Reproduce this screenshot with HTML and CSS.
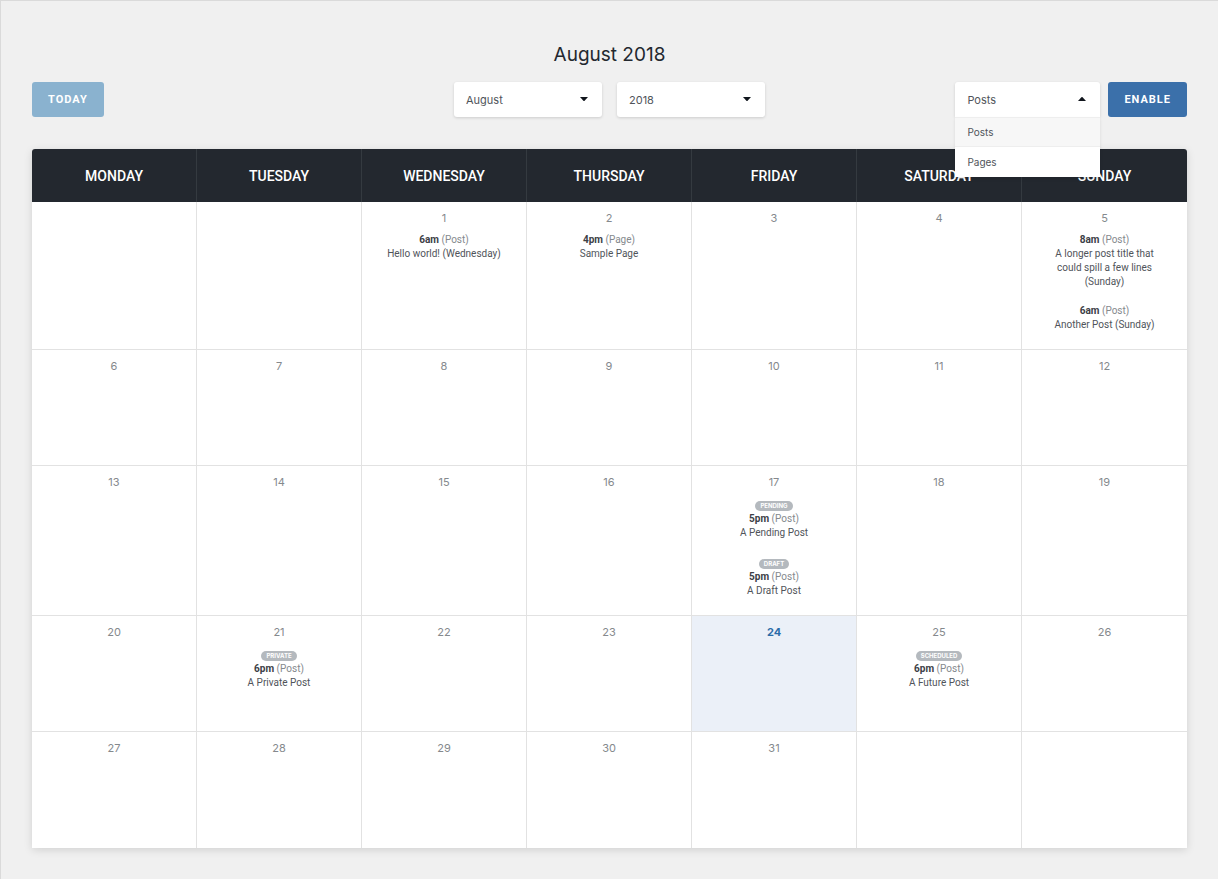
FILE: index.html
```html
<!DOCTYPE html>
<html lang="en">
<head>
<meta charset="utf-8">
<meta name="viewport" content="width=device-width, initial-scale=1">
<title>August 2018</title>
<link rel="stylesheet" href="styles.css">
</head>
<body>
<main class="page">
  <h1 class="title">August 2018</h1>
  <div class="toolbar">
    <div class="group">
      <button class="button button-today" type="button">Today</button>
    </div>
    <div class="group group-date">
      <div class="picker">
        <select class="select" aria-label="Month"><option>August</option></select>
        <svg class="caret" viewBox="0 0 8 4" aria-hidden="true"><path d="M0 0h8L4.600 3.700q-.6.5-1.200 0z"/></svg>
      </div>
      <div class="picker">
        <select class="select" aria-label="Year"><option>2018</option></select>
        <svg class="caret" viewBox="0 0 8 4" aria-hidden="true"><path d="M0 0h8L4.600 3.700q-.6.5-1.200 0z"/></svg>
      </div>
    </div>
    <div class="group group-type">
      <div class="picker picker-open">
        <select class="select" aria-label="Content type"><option>Posts</option><option>Pages</option></select>
        <svg class="caret" viewBox="0 0 8 4" aria-hidden="true"><path d="M0 4h8L4.600.3q-.6-.5-1.200 0z"/></svg>
        <ul class="menu">
          <li><button class="menu-item menu-item-active" type="button">Posts</button></li>
          <li><button class="menu-item" type="button">Pages</button></li>
        </ul>
      </div>
      <button class="button button-enable" type="button">Enable</button>
    </div>
  </div>
  <table class="calendar">
    <thead>
      <tr><th>Monday</th><th>Tuesday</th><th>Wednesday</th><th>Thursday</th><th>Friday</th><th>Saturday</th><th>Sunday</th></tr>
    </thead>
    <tbody>
      <tr>
        <td></td>
        <td></td>
        <td><div class="day">1</div>
          <div class="entry"><strong class="time">6am</strong> <span class="type">(Post)</span><div>Hello world! (Wednesday)</div></div></td>
        <td><div class="day">2</div>
          <div class="entry"><strong class="time">4pm</strong> <span class="type">(Page)</span><div>Sample Page</div></div></td>
        <td><div class="day">3</div></td>
        <td><div class="day">4</div></td>
        <td><div class="day">5</div>
          <div class="entry"><strong class="time">8am</strong> <span class="type">(Post)</span><div>A longer post title that could spill a few lines (Sunday)</div></div>
          <div class="entry"><strong class="time">6am</strong> <span class="type">(Post)</span><div>Another Post (Sunday)</div></div></td>
      </tr>
      <tr>
        <td><div class="day">6</div></td>
        <td><div class="day">7</div></td>
        <td><div class="day">8</div></td>
        <td><div class="day">9</div></td>
        <td><div class="day">10</div></td>
        <td><div class="day">11</div></td>
        <td><div class="day">12</div></td>
      </tr>
      <tr>
        <td><div class="day">13</div></td>
        <td><div class="day">14</div></td>
        <td><div class="day">15</div></td>
        <td><div class="day">16</div></td>
        <td><div class="day">17</div>
          <div class="entry"><div class="status"><span class="badge">Pending</span></div><strong class="time">5pm</strong> <span class="type">(Post)</span><div>A Pending Post</div></div>
          <div class="entry"><div class="status"><span class="badge">Draft</span></div><strong class="time">5pm</strong> <span class="type">(Post)</span><div>A Draft Post</div></div></td>
        <td><div class="day">18</div></td>
        <td><div class="day">19</div></td>
      </tr>
      <tr>
        <td><div class="day">20</div></td>
        <td><div class="day">21</div>
          <div class="entry"><div class="status"><span class="badge">Private</span></div><strong class="time">6pm</strong> <span class="type">(Post)</span><div>A Private Post</div></div></td>
        <td><div class="day">22</div></td>
        <td><div class="day">23</div></td>
        <td class="today"><div class="day">24</div></td>
        <td><div class="day">25</div>
          <div class="entry"><div class="status"><span class="badge">Scheduled</span></div><strong class="time">6pm</strong> <span class="type">(Post)</span><div>A Future Post</div></div></td>
        <td><div class="day">26</div></td>
      </tr>
      <tr>
        <td><div class="day">27</div></td>
        <td><div class="day">28</div></td>
        <td><div class="day">29</div></td>
        <td><div class="day">30</div></td>
        <td><div class="day">31</div></td>
        <td></td>
        <td></td>
      </tr>
    </tbody>
  </table>
</main>
</body>
</html>
```
FILE: styles.css
```css
* {
  box-sizing: border-box;
}

body {
  margin: 0;
  background: #f0f0f0;
  color: #50545a;
  font-family: Inter, "Liberation Sans", sans-serif;
}

.page {
  min-height: 100vh;
  padding: 42px 31px 30px;
  border-top: 1px solid #dadada;
  border-left: 1px solid #dadada;
}

.title {
  margin: 0 0 15px;
  color: #23282f;
  font-size: 19px;
  font-weight: 400;
  line-height: 24px;
  text-align: center;
}

.toolbar {
  display: grid;
  grid-template-columns: 1fr auto 1fr;
  margin-bottom: 32px;
}

.group {
  display: flex;
}

.group-date {
  gap: 15px;
}

.group-type {
  justify-content: flex-end;
  gap: 8px;
}

.button {
  height: 35px;
  padding: 0 16px;
  border: 0;
  border-radius: 3px;
  color: #fff;
  font-family: Roboto, sans-serif;
  font-size: 11px;
  font-weight: 700;
  letter-spacing: 1px;
  text-transform: uppercase;
}

.button-today {
  background: #8ab2cf;
}

.button-enable {
  background: #3b70aa;
}

.picker {
  position: relative;
  width: 148px;
  height: 35px;
  border-radius: 3px;
  background: #fff;
  box-shadow: 0 1px 3px rgba(0, 0, 0, 0.15);
}

.select {
  width: 100%;
  height: 100%;
  padding: 0 12px;
  border: 0;
  background: transparent;
  appearance: none;
  color: #50545a;
  font-family: inherit;
  font-size: 11px;
}

.caret {
  position: absolute;
  top: 15px;
  right: 14px;
  width: 8px;
  height: 4px;
  fill: #10151c;
  pointer-events: none;
}

.picker-open {
  width: 145px;
  border-radius: 3px 3px 0 0;
}

.menu {
  position: absolute;
  top: 100%;
  left: 0;
  z-index: 1;
  width: 100%;
  margin: 0;
  padding: 0;
  background: #fff;
  box-shadow: 0 2px 3px rgba(0, 0, 0, 0.1);
  list-style: none;
}

.menu-item {
  display: block;
  width: 100%;
  height: 30px;
  padding: 0 12px;
  border: 0;
  background: #fff;
  color: #50545a;
  font-family: inherit;
  font-size: 10px;
  text-align: left;
}

.menu-item-active {
  border-top: 1px solid #eee;
  border-bottom: 1px solid #eee;
  background: #f7f7f7;
}

.calendar {
  width: 100%;
  border-spacing: 0;
  border-radius: 3px 3px 0 0;
  background: #fff;
  box-shadow: 0 2px 8px rgba(0, 0, 0, 0.13);
  table-layout: fixed;
}

.calendar th {
  height: 53px;
  padding: 0;
  border-right: 1px solid #343a40;
  background: #23282f;
  color: #fff;
  font-family: Roboto, sans-serif;
  font-size: 14px;
  font-weight: 500;
  text-transform: uppercase;
}

.calendar th:first-child {
  border-top-left-radius: 3px;
}

.calendar th:last-child {
  border-right: 0;
  border-top-right-radius: 3px;
}

.calendar td {
  height: 116px;
  padding: 8px 24px 2px;
  border-right: 1px solid #e2e2e2;
  border-bottom: 1px solid #e2e2e2;
  font-family: Roboto, sans-serif;
  font-size: 10px;
  line-height: 14px;
  text-align: center;
  vertical-align: top;
}

.calendar td:last-child {
  border-right: 0;
}

.calendar tr:last-child td {
  border-bottom: 0;
}

.day {
  margin-bottom: 7px;
  color: #85898d;
  font-family: Inter, sans-serif;
  font-size: 11px;
  line-height: 16px;
}

.today {
  background: #ebf0f8;
}

.today .day {
  color: #2b6ca8;
  font-weight: 700;
}

.entry {
  margin-bottom: 15px;
}

.time {
  color: #3c4046;
  font-weight: 700;
}

.type {
  color: #85898d;
}

.status {
  display: flex;
  justify-content: center;
  padding: 4px 0 1px;
}

.badge {
  padding: 0 5px;
  border-radius: 5px;
  background: #b4b9be;
  color: #fff;
  font-family: Inter, sans-serif;
  font-size: 6px;
  font-weight: 700;
  line-height: 10px;
  text-transform: uppercase;
}
```
